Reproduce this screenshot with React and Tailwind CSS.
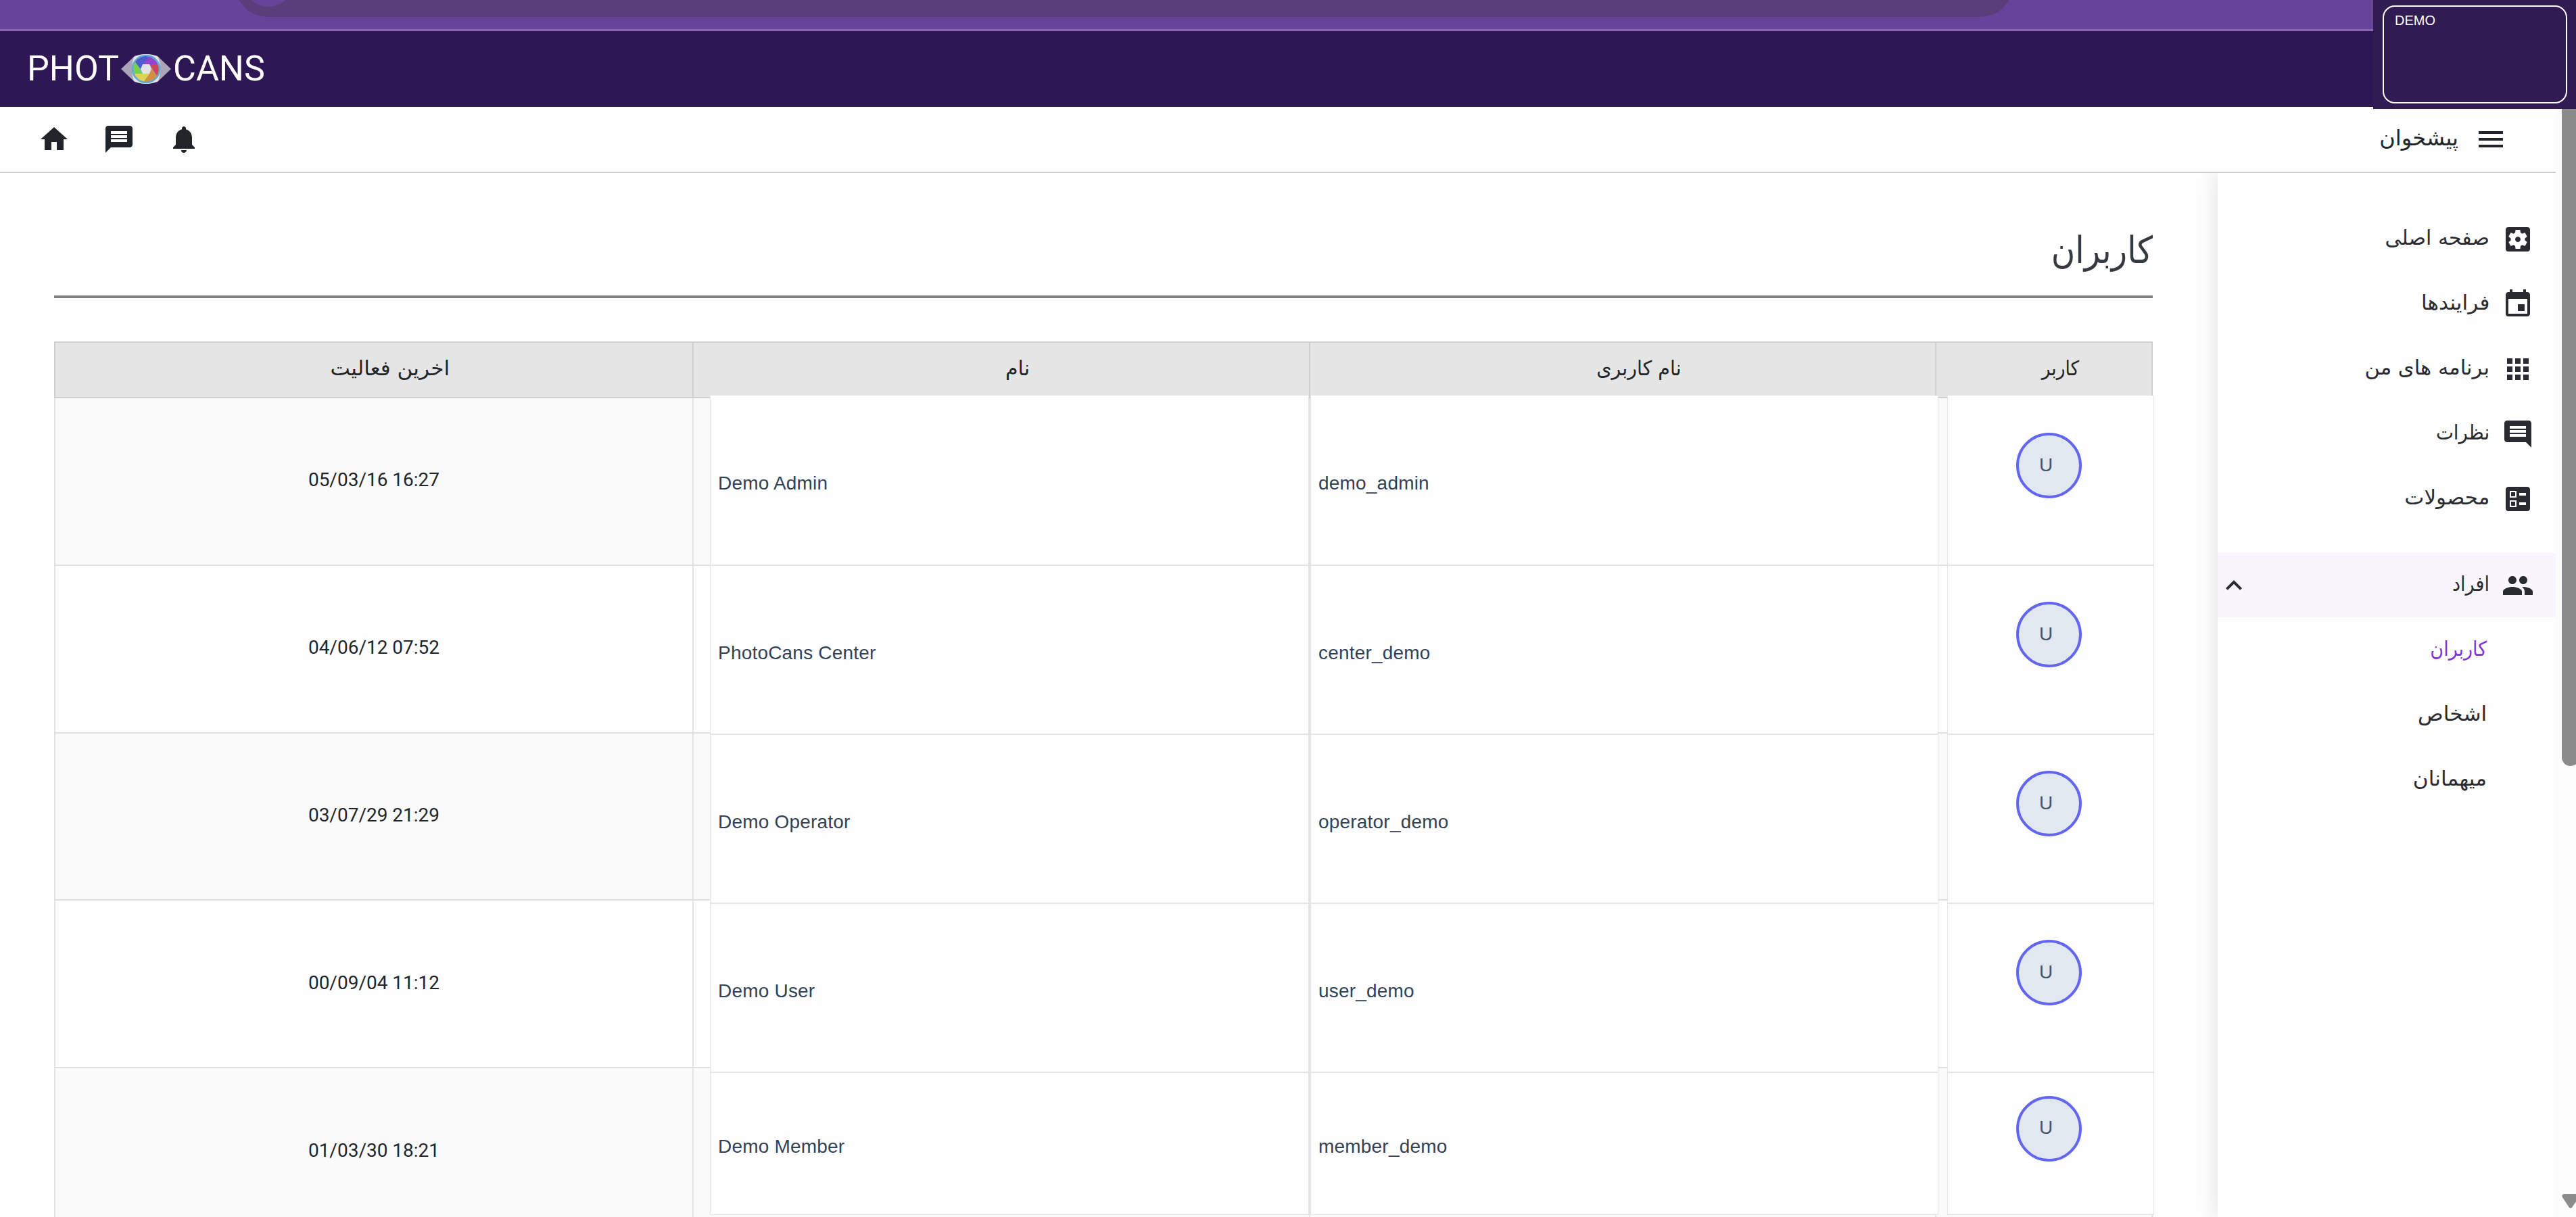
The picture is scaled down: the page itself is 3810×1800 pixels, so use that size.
import React from 'react';
import {
  MdApps,
  MdBallot,
  MdComment,
  MdEvent,
  MdExpandLess,
  MdHome,
  MdMenu,
  MdMessage,
  MdNotifications,
  MdPeople,
  MdSettingsApplications,
} from 'react-icons/md';

const menuItems = [
  { label: 'صفحه اصلی', icon: MdSettingsApplications },
  { label: 'فرایندها', icon: MdEvent, fit: 'scale-x-[1.04]' },
  { label: 'برنامه های من', icon: MdApps, fit: 'scale-x-[1.02]' },
  { label: 'نظرات', icon: MdComment, fit: 'scale-x-[0.92]' },
  { label: 'محصولات', icon: MdBallot, fit: 'scale-x-[1.03]' },
];

const peopleItems = [
  { label: 'کاربران', active: true, fit: 'scale-x-90' },
  { label: 'اشخاص', fit: 'scale-x-[1.04]' },
  { label: 'میهمانان', fit: 'scale-x-[1.04]' },
];

const columns = [
  { label: 'اخرین فعالیت', fit: 'scale-x-[1.04]' },
  { label: 'نام' },
  { label: 'نام کاربری', fit: 'scale-x-95' },
  { label: 'کاربر', fit: 'scale-x-[0.88]' },
];

const users = [
  { name: 'Demo Admin', username: 'demo_admin', lastSeen: '05/03/16 16:27' },
  { name: 'PhotoCans Center', username: 'center_demo', lastSeen: '04/06/12 07:52' },
  { name: 'Demo Operator', username: 'operator_demo', lastSeen: '03/07/29 21:29' },
  { name: 'Demo User', username: 'user_demo', lastSeen: '00/09/04 11:12' },
  { name: 'Demo Member', username: 'member_demo', lastSeen: '01/03/30 18:21' },
];

const EyeLogo = () => (
  <svg width="74" height="46" viewBox="0 0 74 46" className="mx-[3px]">
    <path d="M0 23 L20 4 Q37 -2 54 4 L74 23 L54 42 Q37 48 20 42 Z" fill="#a9a5b8" />
    <path d="M19 5 Q37 -3 55 5 Q61 23 55 41 Q37 49 19 41 Q13 23 19 5 Z" fill="#e3e3e5" />
    <circle cx="37" cy="23" r="21.3" fill="#64a9d8" />
    <g>
      <path d="M40 4.5 A18.7 18.7 0 0 1 54 16 L32 16 Z" fill="#8f45d0" />
      <path d="M54 16 A18.7 18.7 0 0 1 53 33 L42 16 Z" fill="#cf455c" />
      <path d="M53 33 A18.7 18.7 0 0 1 34 41.5 L45 22 Z" fill="#d38f45" />
      <path d="M34 41.5 A18.7 18.7 0 0 1 20 30 L42 30 Z" fill="#ddd552" />
      <path d="M20 30 A18.7 18.7 0 0 1 21 12.5 L32 30 Z" fill="#79d24f" />
      <path d="M21 12.5 A18.7 18.7 0 0 1 40 4.5 L29 23 Z" fill="#4a5bd0" />
    </g>
    <path d="M32 16 L42 16 L45 23 L42 30 L32 30 L29 23 Z" fill="#e3e3e5" />
  </svg>
);

const BrowserBar = () => (
  <div className="relative h-[46px] shrink-0 overflow-hidden border-b-3 border-[#8a68b0] bg-[#68439a]">
    <div className="absolute -top-[74px] left-[347px] h-[99px] w-[2631px] rounded-full bg-[#593e79]" />
    <div className="absolute -top-[66px] left-[359px] size-[76px] rounded-full bg-[#68439a]" />
  </div>
);

const Header = () => (
  <header className="flex h-[112px] shrink-0 items-center bg-[#2d1755] pl-[40px] font-['Roboto',sans-serif] text-[52px] leading-none text-white">
    <span>PHOT</span>
    <EyeLogo />
    <span>CANS</span>
  </header>
);

const DemoBadge = () => (
  <div className="absolute top-0 right-0 h-[161px] w-[300px] bg-[#301b52] pt-[8px] pl-[14px]">
    <div className="h-[145px] w-[273px] rounded-[18px] border-2 border-white pt-[8px] pl-[16px] font-['Liberation_Sans',sans-serif] text-[20px] leading-[24px] text-white">
      DEMO
    </div>
  </div>
);

const Toolbar = () => (
  <div className="flex h-[98px] shrink-0 items-center justify-between border-b-2 border-[#cccccc] pr-[72px] pl-[56px] text-[#212529]">
    <div className="flex gap-[48px]">
      <MdHome size={48} />
      <MdMessage size={48} />
      <MdNotifications size={48} />
    </div>
    <div dir="rtl" className="flex items-center gap-[24px]">
      <MdMenu size={48} />
      <span className="pb-[4px] text-[32px] leading-[48px]">پیشخوان</span>
    </div>
  </div>
);

const Sidebar = () => (
  <aside dir="rtl" className="w-[500px] shrink-0 bg-[#fefefe] pt-[50px] text-[30px] text-[#292b30] shadow-[0_0_32px_rgba(0,0,0,0.13)]">
    {menuItems.map(({ label, icon: Icon, fit }) => (
      <div key={label} className="flex h-24 items-center gap-[18px] pr-8">
        <Icon size={48} />
        <span className={`origin-right pb-[4px] leading-[48px] ${fit || ''}`}>{label}</span>
      </div>
    ))}
    <div className="mt-8 flex h-[95px] items-center gap-[18px] bg-[#f8f6fc] pr-8">
      <MdPeople size={48} />
      <span className="origin-right scale-x-[0.9] pb-[4px] leading-[48px]">افراد</span>
      <MdExpandLess size={48} className="mr-auto" />
    </div>
    {peopleItems.map((item) => (
      <div
        key={item.label}
        className={`flex h-24 items-center pr-[102px] ${item.active ? 'text-[#7f33d9]' : ''}`}
      >
        <span className={`origin-right pb-[4px] ${item.fit}`}>{item.label}</span>
      </div>
    ))}
  </aside>
);

const UsersTable = () => (
  <div className="relative mt-[64px]">
    <div className="grid grid-cols-[944px_912px_926px_322px] border-y-2 border-[#d0d0d0] bg-[#e5e5e5] text-[30px] text-[#212529]">
      {columns.map((column) => (
        <div
          key={column.label}
          dir="rtl"
          className="flex h-[80px] items-center justify-center border-l-2 border-[#d0d0d0] pb-[5px] pl-[48px] last:border-r-2"
        >
          <span className={column.fit}>{column.label}</span>
        </div>
      ))}
    </div>
    {users.map((user) => (
      <div
        key={user.username}
        className="grid h-[247.8px] grid-cols-[944px_912px_926px_322px] border-b-2 border-[#e0e0e0] odd:bg-[#fefefe] even:bg-[#fafafa]"
      >
        <div className="flex items-center justify-center border-l-2 border-[#e3e3e3] pb-[3px] font-['Roboto',sans-serif] text-[28px] text-[#212529]">
          {user.lastSeen}
        </div>
        <div className="border-l-2 border-[#e3e3e3]" />
        <div className="border-l-2 border-[#e3e3e3]" />
        <div className="border-x-2 border-[#e3e3e3]" />
      </div>
    ))}

    {/* Detail cells sit on top of the striped rows */}
    <div className="absolute top-[80px] left-[970px] font-['Liberation_Sans',sans-serif] text-[28px] text-[#334155]">
      {users.map((user) => (
        <div key={user.username} className="group flex h-[250px] first:h-[252px] last:h-[210px]">
          <div className="flex w-[886px] items-center border-x border-b-2 border-[#e5e5e5] bg-[#fefefe] pt-[9px] pl-[11px] tracking-[0.2px] group-last:border-b">
            {user.name}
          </div>
          <div className="ml-[2px] flex w-[929px] items-center border-x border-b-2 border-[#e5e5e5] bg-[#fefefe] pt-[9px] pl-[11px] tracking-[0.2px] group-last:border-b">
            {user.username}
          </div>
          <div className="ml-[13px] flex w-[306px] items-center border-x border-b-2 border-[#e5e5e5] bg-[#fefefe] pb-[45px] pl-[101px] group-first:pb-[43px] group-last:border-b">
            <div className="flex size-[97px] items-center justify-center rounded-full border-4 border-[#6366f1] bg-[#e2e8f0] pr-[9px] pb-[2px] text-[#475569]">
              U
            </div>
          </div>
        </div>
      ))}
    </div>
  </div>
);

const ScrollBar = () => (
  <div className="relative w-[30px] shrink-0 overflow-hidden bg-[#fcfcfc]">
    <div className="ml-[9px] h-[975px] w-[26px] rounded-b-[13px] bg-[#8b8b8b]" />
    <svg width="26" height="22" viewBox="0 0 26 22" className="absolute bottom-[12px] left-[9px]">
      <path d="M3 0 H23 Q27 1 25 5 L15 20 Q13 22 11 20 L1 5 Q-1 1 3 0 Z" fill="#8b8b8b" />
    </svg>
  </div>
);

export default function App() {
  return (
    <div className="relative flex h-[1800px] w-[3810px] flex-col overflow-hidden bg-[#fefefe] font-['DejaVu_Sans',sans-serif]">
      <BrowserBar />
      <Header />
      <div className="flex min-h-0 flex-1">
        <div className="flex min-w-0 flex-1 flex-col">
          <Toolbar />
          <div className="flex min-h-0 flex-1 overflow-hidden">
            <main className="min-w-0 flex-1 pt-[61px] pr-[96px] pl-[80px]">
              <div dir="rtl" className="h-[124px] border-b-4 border-[#808080]">
                <h1 className="origin-right scale-x-[0.88] text-[55px] leading-[106px] text-[#343a40]">کاربران</h1>
              </div>
              <UsersTable />
            </main>
            <Sidebar />
          </div>
        </div>
        <ScrollBar />
      </div>
      <DemoBadge />
    </div>
  );
}
